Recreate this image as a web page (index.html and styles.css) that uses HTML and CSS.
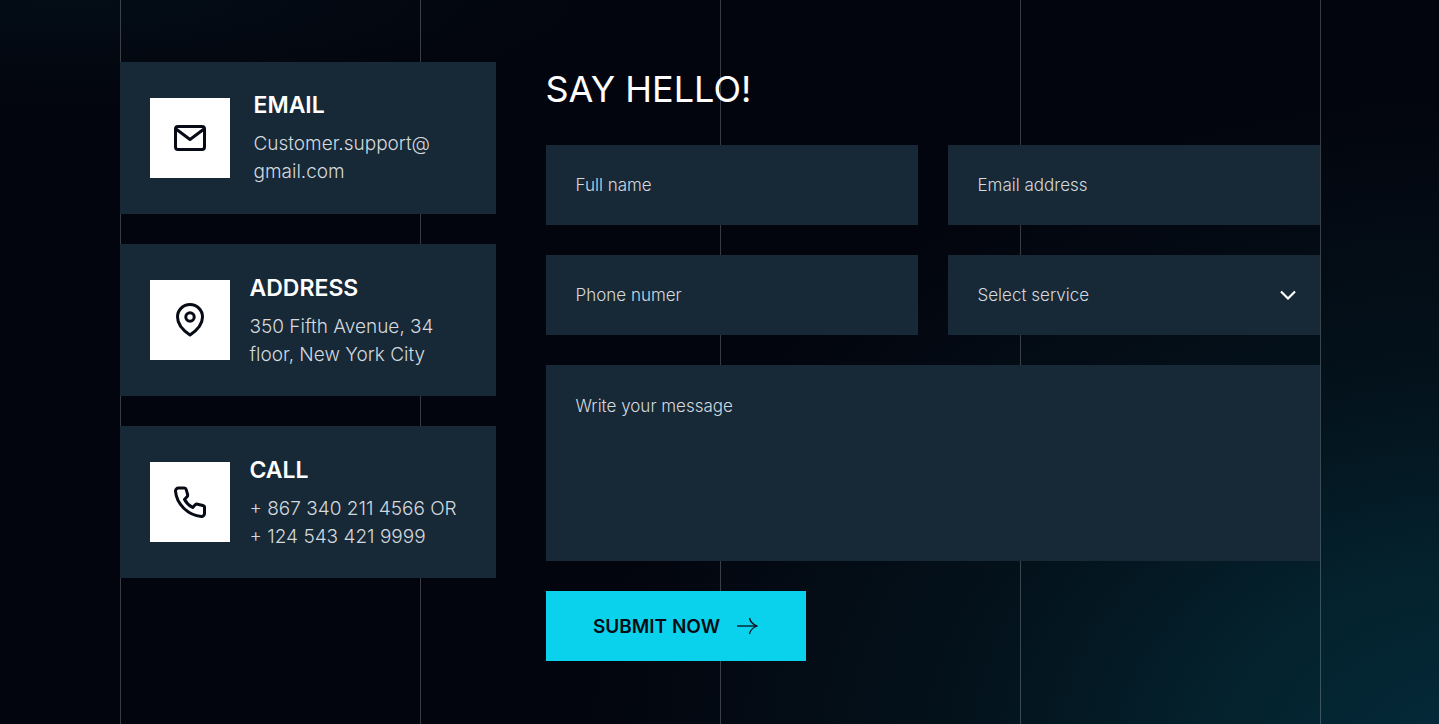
FILE: index.html
```html
<!DOCTYPE html>
<html lang="en">
<head>
  <meta charset="UTF-8" />
  <meta name="viewport" content="width=device-width, initial-scale=1" />
  <title>Contact</title>
  <link rel="stylesheet" href="styles.css">
</head>
<body>
  <main class="contact">
    <div class="container">
      <!-- Vertical guide lines behind the content -->
      <div class="grid-lines" aria-hidden="true">
        <span></span><span></span><span></span><span></span><span></span>
      </div>

      <!-- Contact info cards -->
      <section class="info-list">
        <article class="info-card info-card-wide">
          <div class="info-icon">
            <svg width="40" height="40" viewBox="0 0 40 40" fill="none" stroke="currentColor" stroke-width="3" stroke-linecap="round" stroke-linejoin="round">
              <rect x="5.5" y="8.5" width="29" height="23" rx="2.5" />
              <path d="M6 11L20 21.5L34 11" />
            </svg>
          </div>
          <div class="info-text">
            <h3>EMAIL</h3>
            <p>Customer.support@<br>gmail.com</p>
          </div>
        </article>

        <article class="info-card">
          <div class="info-icon">
            <svg width="40" height="40" viewBox="0 0 40 40" fill="none" stroke="currentColor" stroke-width="3" stroke-linecap="round" stroke-linejoin="round">
              <path d="M20 35C17 33 7.5 26 7.5 17a12.5 12.5 0 0 1 25 0C32.5 26 23 33 20 35Z" />
              <circle cx="20" cy="17" r="4.2" />
            </svg>
          </div>
          <div class="info-text">
            <h3>ADDRESS</h3>
            <p>350 Fifth Avenue, 34<br>floor, New York City</p>
          </div>
        </article>

        <article class="info-card">
          <div class="info-icon">
            <svg width="40" height="40" viewBox="0 0 40 40" fill="none" stroke="currentColor" stroke-width="3" stroke-linecap="round" stroke-linejoin="round">
              <path d="M8.500 6h5.700a2 2 0 0 1 2 1.500l1.400 5a2.500 2.500 0 0 1-.6 2.300L14.500 17.500c1.800 3.400 4.700 6.200 8.200 8l2.500-2.700a2.500 2.500 0 0 1 2.300-.600l5.400 1.300a2 2 0 0 1 1.600 2v5.900a3 3 0 0 1-3.200 3C18 33.500 6.500 22 5.500 9.200A3 3 0 0 1 8.500 6Z" />
            </svg>
          </div>
          <div class="info-text">
            <h3>CALL</h3>
            <p>+ 867 340 211 4566 OR<br>+ 124 543 421 9999</p>
          </div>
        </article>
      </section>

      <!-- Contact form -->
      <section class="form-section">
        <h2>SAY HELLO!</h2>
        <form class="contact-form">
          <input class="field" type="text" placeholder="Full name" aria-label="Full name" />
          <input class="field" type="email" placeholder="Email address" aria-label="Email address" />
          <input class="field" type="tel" placeholder="Phone numer" aria-label="Phone numer" />
          <div class="select-wrap">
            <select class="field" aria-label="Select service">
              <option>Select service</option>
            </select>
            <svg class="chevron" width="16" height="10" viewBox="0 0 16 10" fill="none" stroke="currentColor" stroke-width="2.2">
              <path d="M1 1.5L8 8.5L15 1.5" />
            </svg>
          </div>
          <textarea class="field message" placeholder="Write your message" aria-label="Write your message"></textarea>
          <button class="submit" type="submit">
            SUBMIT NOW
            <svg width="22" height="18" viewBox="0 0 22 18" fill="none" stroke="currentColor" stroke-width="1.3">
              <path d="M1 9H20.5" />
              <path d="M13.5 1C14.2 4.500 17 7.500 21 9C17 10.500 14.200 13.500 13.500 17" />
            </svg>
          </button>
        </form>
      </section>
    </div>
  </main>
</body>
</html>
```
FILE: styles.css
```css
:root {
  --bg-color: #03050e;
  --panel-color: #172836;
  --text-color: #d3d9df;
  --line-color: rgba(255, 255, 255, 0.22);
  --accent: #0bd2ec;
  --dark: #070b16;
}

* {
  box-sizing: border-box;
}

body {
  margin: 0;
  font-family: Inter, "Liberation Sans", Arial, sans-serif;
  font-weight: 300;
  color: var(--text-color);
  background-color: var(--bg-color);
}

/* Soft teal glow in the bottom right corner, a faint one top left */
.contact {
  min-height: 100vh;
  display: flex;
  background:
    radial-gradient(ellipse 62% 92% at 103% 106%, #042b3c, #04222d 30%, rgba(4, 24, 34, 0.7) 58%, transparent),
    radial-gradient(ellipse 35% 14% at 5% 0, #030d16, transparent);
}

.container {
  position: relative;
  width: 100%;
  max-width: 1200px;
  margin: 0 auto;
  padding: 62px 0;
  display: grid;
  grid-template-columns: 376px 1fr;
  gap: 50px;
}

/* Guide lines */
.grid-lines {
  position: absolute;
  inset: 0 -1px 0 0;
  display: flex;
  justify-content: space-between;
  pointer-events: none;
}
.grid-lines span {
  width: 1px;
  background-color: var(--line-color);
}

/* Info cards */
.info-list {
  position: relative;
  display: flex;
  flex-direction: column;
  gap: 30px;
}
.info-card {
  display: flex;
  align-items: center;
  gap: 20px;
  min-height: 152px;
  padding: 26px 30px;
  background-color: var(--panel-color);
}
.info-card-wide {
  gap: 24px;
}
.info-icon {
  flex: none;
  display: flex;
  align-items: center;
  justify-content: center;
  width: 80px;
  height: 80px;
  background-color: #fff;
  color: var(--dark);
}
.info-text {
  padding-top: 3px;
  white-space: nowrap;
}
.info-card-wide .info-text {
  padding-top: 0;
}
.info-text h3 {
  margin: 0 0 11px;
  font-size: 23px;
  line-height: 28px;
  font-weight: 600;
  color: #fff;
}
.info-text p {
  margin: 0;
  font-size: 19px;
  line-height: 28px;
}

/* Form */
.form-section {
  position: relative;
}
.form-section h2 {
  margin: 0 0 29px;
  font-size: 36px;
  line-height: 54px;
  font-weight: 400;
  color: #fff;
}
.contact-form {
  display: grid;
  grid-template-columns: 1fr 1fr;
  gap: 30px;
}
.field {
  display: block;
  width: 100%;
  height: 80px;
  padding: 0 30px;
  border: none;
  border-radius: 0;
  outline: none;
  appearance: none;
  background-color: var(--panel-color);
  color: var(--text-color);
  font: inherit;
  font-size: 17px;
}
.field::placeholder {
  color: var(--text-color);
  opacity: 1;
}
.select-wrap {
  position: relative;
}
.chevron {
  position: absolute;
  right: 24px;
  top: 35px;
  color: #fff;
  pointer-events: none;
}
.message {
  grid-column: 1 / -1;
  height: 196px;
  padding: 28px 30px;
  line-height: 26px;
  resize: none;
}
.submit {
  justify-self: start;
  display: flex;
  align-items: center;
  justify-content: center;
  gap: 16px;
  width: 260px;
  height: 70px;
  padding: 0;
  border: none;
  background-color: var(--accent);
  color: var(--dark);
  font: inherit;
  font-size: 19px;
  font-weight: 600;
  white-space: nowrap;
  cursor: pointer;
}

@media (max-width: 1000px) {
  .container {
    grid-template-columns: 1fr;
    padding: 62px 20px;
  }
}
```
